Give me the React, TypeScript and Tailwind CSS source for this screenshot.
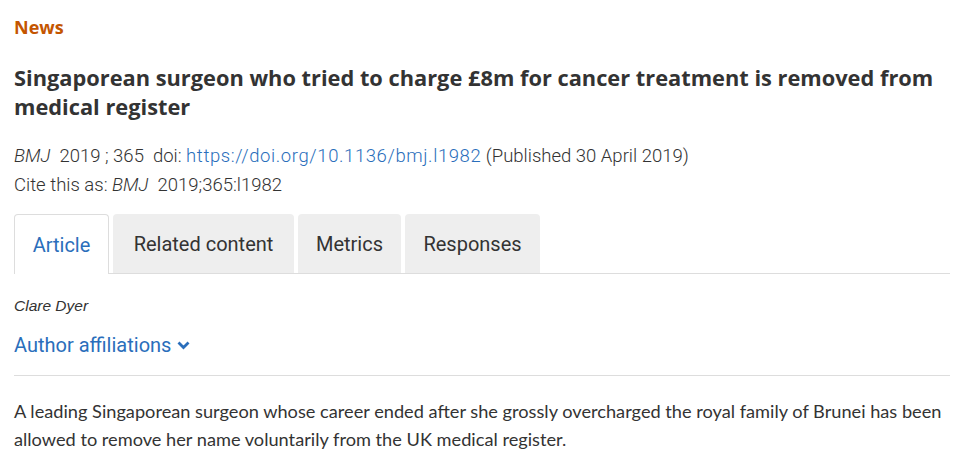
import React from 'react'

const tabs = [
    { label: 'Article', w: 'w-[95px]' },
    { label: 'Related content', w: 'w-[181px]' },
    { label: 'Metrics', w: 'w-[103px]' },
    { label: 'Responses', w: 'w-[135px]' },
]

export default function App() {
    return (
        <div className="bg-white w-[965px] h-[457px] overflow-hidden pl-[14px] pr-[15px] text-[#333] font-['Lato',sans-serif]">
            <div className="pt-[14px] text-[18px] leading-[26px] font-bold text-[#c45500] font-['Open_Sans',sans-serif]">News</div>

            <h1 className="mt-[23px] text-[21.8px] leading-[29px] font-bold text-[#333] font-['Open_Sans',sans-serif]">
                Singaporean surgeon who tried to charge £8m for cancer treatment is removed from medical register
            </h1>

            <div className="mt-[21px] text-[18.5px] leading-[29px] text-[#333] font-['Roboto',sans-serif] font-light">
                <i>BMJ</i>&nbsp; 2019 ; 365&nbsp; doi:{' '}
                <a className="text-[#2a6ebb] tracking-[0.6px]">https://doi.org/10.1136/bmj.l1982</a> (Published 30 April 2019)
            </div>
            <div className="text-[18.5px] leading-[29px] text-[#333] font-['Roboto',sans-serif] font-light">
                Cite this as: <i>BMJ</i>&nbsp; 2019;365:l1982
            </div>

            <div className="mt-[14px] flex gap-[4px] border-b border-[#ddd] h-[60px] font-['Roboto',sans-serif]">
                {tabs.map((t, i) => (
                    <div
                        key={t.label}
                        className={
                            i === 0
                                ? `${t.w} flex items-center justify-center rounded-t-[4px] border border-b-0 border-[#ddd] bg-white text-[#2a6ebb] text-[20px] mb-[-1px] h-[60px]`
                                : `${t.w} flex items-center justify-center rounded-t-[4px] bg-[#eee] text-[#333] text-[20px] h-[59px]`
                        }
                    >
                        {t.label}
                    </div>
                ))}
            </div>

            <div className="mt-[22px] text-[15.5px] leading-[20px] italic text-[#333] font-['Liberation_Sans',sans-serif]">Clare Dyer</div>

            <div className="mt-[16px] flex items-center gap-[6px] text-[20px] leading-[26px] text-[#2a6ebb] font-['Roboto',sans-serif]">
                Author affiliations
                <svg width="13" height="9" viewBox="0 0 13 9" fill="none">
                    <path d="M1.5 1.5l5 5 5-5" stroke="#2a6ebb" strokeWidth="2.8" />
                </svg>
            </div>

            <div className="mt-[17px] border-t border-[#ddd]" />

            <p className="mt-[21px] text-[18.2px] leading-[28px] text-[#333]">
                A leading Singaporean surgeon whose career ended after she grossly overcharged the royal family of Brunei has been allowed to remove her name voluntarily from the UK medical register.
            </p>
        </div>
    )
}
